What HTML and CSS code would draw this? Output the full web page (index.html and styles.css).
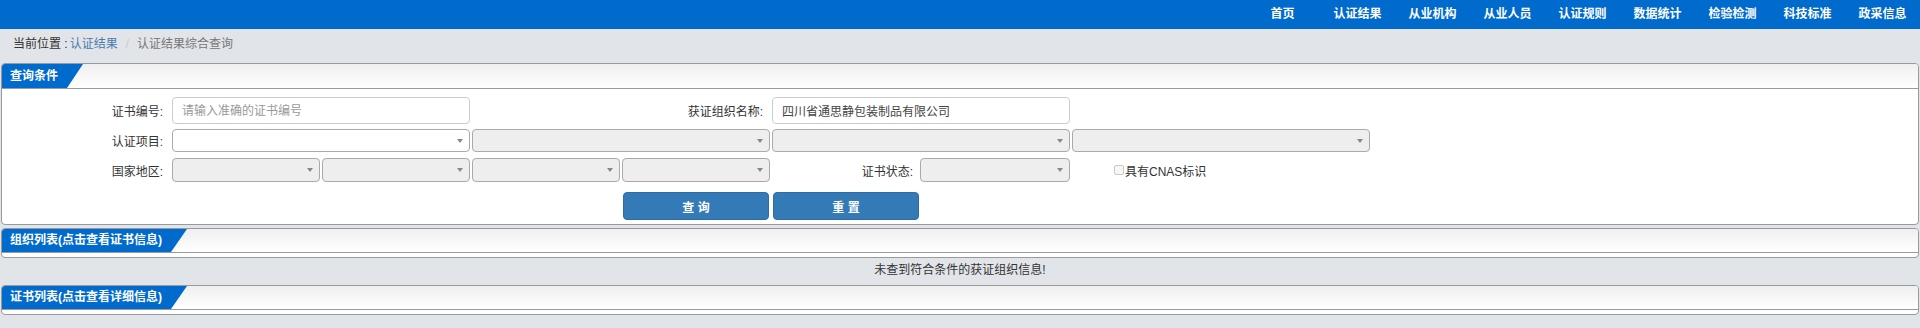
FILE: index.html
```html
<!DOCTYPE html>
<html lang="zh-CN">
<head>
<meta charset="utf-8">
<title>认证结果综合查询</title>
<link rel="stylesheet" href="styles.css">
</head>
<body>
<header class="topnav">
  <a class="nav-item">首页</a>
  <a class="nav-item">认证结果</a>
  <a class="nav-item">从业机构</a>
  <a class="nav-item">从业人员</a>
  <a class="nav-item">认证规则</a>
  <a class="nav-item">数据统计</a>
  <a class="nav-item">检验检测</a>
  <a class="nav-item">科技标准</a>
  <a class="nav-item">政采信息</a>
</header>

<div class="breadcrumb">
  <span class="bc-label">当前位置 :</span><a class="bc-link">认证结果</a><span class="bc-sep">/</span><span class="bc-active">认证结果综合查询</span>
</div>

<section class="panel panel-form">
  <div class="panel-head"><span class="tab">查询条件</span></div>
  <div class="panel-body">
    <div class="frow r1">
      <label class="lbl">证书编号:</label>
      <div class="cell"><input class="txt" type="text" placeholder="请输入准确的证书编号"></div>
      <label class="lbl">获证组织名称:</label>
      <div class="cell"><input class="txt" type="text" value="四川省通思静包装制品有限公司"></div>
    </div>
    <div class="frow r2">
      <label class="lbl">认证项目:</label>
      <div class="cell"><div class="sel"></div></div>
      <div class="cell"><div class="sel off"></div></div>
      <div class="cell"><div class="sel off"></div></div>
      <div class="cell"><div class="sel off"></div></div>
    </div>
    <div class="frow r3">
      <label class="lbl">国家地区:</label>
      <div class="cell pair"><div class="sel off"></div><div class="sel off"></div></div>
      <div class="cell pair"><div class="sel off"></div><div class="sel off"></div></div>
      <div class="cell status">
        <label class="lbl">证书状态:</label>
        <div class="sel off half"></div>
      </div>
      <div class="cell check">
        <span class="box"></span><span>具有CNAS标识</span>
      </div>
    </div>
    <div class="frow r4">
      <div class="btns">
        <button class="btn">查 询</button>
        <button class="btn">重 置</button>
      </div>
    </div>
  </div>
</section>

<section class="panel panel-list">
  <div class="panel-head"><span class="tab">组织列表(点击查看证书信息)</span></div>
  <div class="panel-body empty"></div>
</section>

<div class="message">未查到符合条件的获证组织信息!</div>

<section class="panel panel-list last">
  <div class="panel-head"><span class="tab">证书列表(点击查看详细信息)</span></div>
  <div class="panel-body empty"></div>
</section>
</body>
</html>
```

FILE: styles.css
```css
* { box-sizing: border-box; }

body {
  margin: 0;
  background: #e1e5e9;
  color: #333;
  font-family: "Liberation Sans", "Noto Sans CJK SC", sans-serif;
  font-size: 12px;
}

.topnav {
  height: 29px;
  background: #006acd;
  display: flex;
  justify-content: flex-end;
}

.nav-item {
  width: 75px;
  text-align: center;
  line-height: 29px;
  color: #fff;
  font-weight: bold;
  font-size: 12px;
  text-decoration: none;
}

.breadcrumb {
  height: 34px;
  padding: 6px 13px 0;
  line-height: 18px;
}

.bc-label { color: #333; margin-right: 2px; }
.bc-link { color: #4a7cae; text-decoration: none; }
.bc-sep { color: #ccc; padding: 0 8px; }
.bc-active { color: #777; }

.panel {
  margin: 0 1px;
  border: 1px solid #9a9a9a;
  border-radius: 4px;
  background: #fff;
  overflow: hidden;
}

.panel-list { margin-top: 3px; }

.panel-head {
  height: 25px;
  border-bottom: 1px solid #9a9a9a;
  background: linear-gradient(#efefef, #ffffff);
  display: flex;
}

.panel-list .panel-head { height: 24px; }

.tab {
  background: #006acd;
  color: #fff;
  font-weight: bold;
  line-height: 24px;
  padding: 0 25px 0 8px;
  clip-path: polygon(0 0, 100% 0, calc(100% - 16px) 100%, 0 100%);
}

.panel-list .tab { line-height: 23px; }

.panel-body {
  padding: 8px 0 4px;
}

.panel-body.empty {
  padding: 0;
  height: 4px;
}

.frow {
  display: grid;
  grid-template-columns: 168px 298px 298px 298px 298px;
  column-gap: 2px;
  align-items: center;
}

.r1 { height: 27px; }
.r2 { height: 23px; margin-top: 5px; }
.r3 { height: 24px; margin-top: 6px; }
.r4 { height: 28px; margin-top: 10px; }

.lbl {
  text-align: right;
  padding-right: 7px;
  color: #333;
  white-space: nowrap;
}

.cell { height: 100%; display: flex; align-items: center; }

.txt {
  width: 100%;
  height: 27px;
  border: 1px solid #ccc;
  border-radius: 4px;
  padding: 0 9px;
  font-family: "Liberation Sans", "Noto Sans CJK SC", sans-serif;
  font-size: 12px;
  color: #444;
  background: #fff;
  outline: none;
}

.txt::placeholder { color: #999; }

.sel {
  width: 100%;
  height: 100%;
  border: 1px solid #aaa;
  border-radius: 4px;
  background: #fff;
  display: flex;
  align-items: center;
  justify-content: flex-end;
  padding-right: 6px;
}

.sel::after {
  content: "";
  border-left: 3px solid transparent;
  border-right: 3px solid transparent;
  border-top: 4px solid #888;
}

.sel.off { background: #eee; }

.pair { gap: 2px; }
.pair .sel { flex: 1; }

.status { justify-content: flex-end; }
.status .sel.half { width: 150px; flex: none; }

.check { padding-left: 42px; gap: 1px; }

.box {
  width: 10px;
  height: 10px;
  border: 1px solid #c8c8c8;
  border-radius: 2px;
  background: #f7f7f7;
}

.btns {
  grid-column: 2 / 6;
  display: flex;
  justify-content: center;
  gap: 4px;
  height: 28px;
}

.btn {
  width: 146px;
  height: 28px;
  background: #337ab7;
  border: 1px solid #2e6da4;
  border-radius: 4px;
  color: #fff;
  font-family: "Liberation Sans", "Noto Sans CJK SC", sans-serif;
  font-size: 12px;
  font-weight: bold;
  padding: 0;
}

.message {
  height: 24px;
  line-height: 24px;
  text-align: center;
  color: #333;
}
```
